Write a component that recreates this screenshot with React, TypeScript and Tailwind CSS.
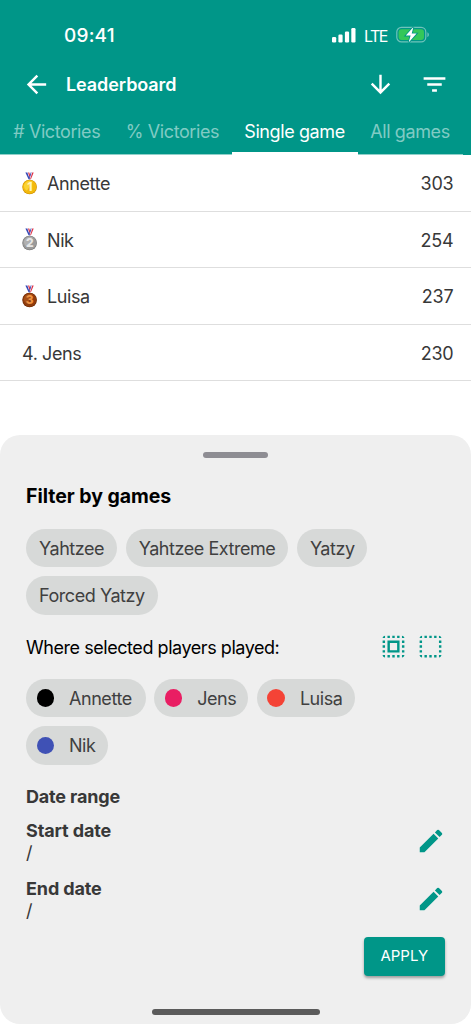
import React from 'react';
import { MdArrowBack, MdArrowDownward, MdEdit, MdFilterList, MdSelectAll } from 'react-icons/md';

interface Player {
  name: string;
  score: number;
}

const players: Player[] = [
  { name: 'Annette', score: 303 },
  { name: 'Nik', score: 254 },
  { name: 'Luisa', score: 237 },
  { name: 'Jens', score: 230 },
];

const tabs = [
  { label: '# Victories', className: 'w-[113.5px]' },
  { label: '% Victories', className: 'w-[118px]' },
  { label: 'Single game', className: 'w-[126px]' },
  { label: 'All games', className: 'w-[105px]' },
];

const games = [
  { label: 'Yahtzee', className: 'w-[91px]' },
  { label: 'Yahtzee Extreme', className: 'w-[162.5px]' },
  { label: 'Yatzy', className: 'w-[70.5px]' },
  { label: 'Forced Yatzy', className: 'w-[132px]' },
];

const playerChips = [
  { label: 'Annette', className: 'w-[119.5px]', dot: 'bg-black' },
  { label: 'Jens', className: 'w-[94px]', dot: 'bg-[#e91e63]' },
  { label: 'Luisa', className: 'w-[98.5px]', dot: 'bg-[#f44336]' },
  { label: 'Nik', className: 'w-[82px]', dot: 'bg-[#3f51b5]' },
];

const medals = [
  { light: '#ffe14a', base: '#f3b90c', dark: '#c98a00', digit: '#fff3b8' },
  { light: '#bdbdbd', base: '#9a9a9a', dark: '#737373', digit: '#e6e6e6' },
  { light: '#b4591d', base: '#8f3c0c', dark: '#682602', digit: '#ee9444' },
];

const Medal: React.FC<{ place: number }> = ({ place }) => {
  const m = medals[place - 1];
  return (
    <svg width="16" height="23" viewBox="0 0 16 23" className="-mt-0.5 shrink-0">
      <path d="M3.4.5h2.2l2.7 6.8H6.6z" fill="#3346b5" />
      <path d="M5.3.5h1.2l1.8 5H7.2z" fill="#f4f4fa" />
      <path d="M6 .5h1.3l1.1 3.4-.6 2z" fill="#df3044" />
      <path d="M8.6.5h1.2l-2 6.8h-.9z" fill="#3346b5" />
      <path d="M9.6.5h.8l-2 6.8h-.8z" fill="#f4f4fa" />
      <path d="M10.2.5h1.5l-2.8 6.8h-.8z" fill="#df3044" />
      <circle cx="7.6" cy="15" r="7.3" fill={m.dark} />
      <circle cx="7.6" cy="14.8" r="6.9" fill={m.base} />
      <path d="M2 13a6 6 0 0 1 8.7-3.4L5 18.8A6 6 0 0 1 2 13z" fill={m.light} opacity=".65" />
      <text x="7.6" y="19" textAnchor="middle" fontSize="12" fontWeight="800" fill={m.digit} fontFamily="Inter, sans-serif">
        {place}
      </text>
    </svg>
  );
};

const DeselectIcon: React.FC = () => (
  <svg width="29" height="29" viewBox="0 0 24 24" fill="currentColor">
    <path d="M3 5h2V3c-1.1 0-2 .9-2 2zm0 8h2v-2H3v2zm4 8h2v-2H7v2zM3 9h2V7H3v2zm10-6h-2v2h2V3zm6 0v2h2c0-1.1-.9-2-2-2zM5 21v-2H3c0 1.1.9 2 2 2zm-2-4h2v-2H3v2zM9 3H7v2h2V3zm2 18h2v-2h-2v2zm8-8h2v-2h-2v2zm0 8c1.1 0 2-.9 2-2h-2v2zm0-12h2V7h-2v2zm0 8h2v-2h-2v2zm-4 4h2v-2h-2v2zm0-16h2V3h-2v2z" />
  </svg>
);

const StatusBar: React.FC = () => (
  <div className="flex h-[70px] items-center pl-16 pr-[41px]">
    <span className="pt-0.5 text-[19px] font-medium tracking-[0.2px]">09:41</span>
    <svg width="24" height="15" viewBox="0 0 24 15" fill="currentColor" className="ml-auto">
      <rect x="0" y="9" width="4.2" height="5.5" rx="1.2" />
      <rect x="6.4" y="6.5" width="4.2" height="8" rx="1.2" />
      <rect x="12.9" y="3.5" width="4.2" height="11" rx="1.2" />
      <rect x="19.3" y="0" width="4.2" height="14.5" rx="1.2" />
    </svg>
    <span className="ml-2 w-6 pt-px text-base tracking-[-1.5px]">LTE</span>
    <svg width="34" height="18" viewBox="0 0 34 18" className="ml-[8px]">
      <rect x=".8" y="1.4" width="29" height="14.4" rx="4.6" fill="none" stroke="#6fc3bb" strokeWidth="1.2" />
      <rect x="2.6" y="3.2" width="25.4" height="10.8" rx="3" fill="#34c759" />
      <path d="M31.4 6.2c2 .8 2 4 0 4.8z" fill="#6fc3bb" />
      <path d="M17.4 1 9.8 9.6h4.8l-2 6.8 8-8.8h-4.9z" fill="white" stroke="#009688" strokeWidth="1.8" paintOrder="stroke" />
    </svg>
  </div>
);

const Header: React.FC = () => (
  <header className="h-[155px] bg-[#009688] text-white">
    <StatusBar />
    <div className="flex h-[29px] items-center pl-[22px] pr-[22px]">
      <MdArrowBack size={29} />
      <h1 className="ml-[15px] text-lg font-semibold tracking-[-0.08px]">Leaderboard</h1>
      <MdArrowDownward size={29} className="ml-auto" />
      <MdFilterList size={29} className="ml-[25.5px]" />
    </div>
    <nav className="flex h-14">
      {tabs.map((tab) => (
        <button
          key={tab.label}
          className={`flex h-14 shrink-0 items-center justify-center whitespace-nowrap pt-[13px] text-lg tracking-[-0.4px] ${tab.className} ${
            tab.label === 'Single game'
              ? 'border-b-[3px] border-white pb-0'
              : 'border-b border-[#8fd0c9] pb-0.5 text-[#80cbc4]'
          }`}
        >
          {tab.label}
        </button>
      ))}
    </nav>
  </header>
);

const Chip: React.FC<{ label: string; className: string; dot?: string }> = ({ label, className, dot }) => (
  <div className={`flex h-[38.5px] items-center whitespace-nowrap rounded-full bg-[#d7d9d8] text-lg tracking-[-0.45px] text-[#404040] ${className} ${dot ? 'pl-[10.5px]' : 'pl-[13px]'}`}>
    {dot && <span className={`mr-[15px] size-[17.5px] shrink-0 rounded-full ${dot}`} />}
    <span className="pt-0.5">{label}</span>
  </div>
);

const DateField: React.FC<{ label: string }> = ({ label }) => (
  <div className="flex h-[58.5px] justify-between">
    <div className="pt-px text-lg leading-[22px]">
      <div className="font-bold tracking-[-0.12px]">{label}</div>
      <div>/</div>
    </div>
    <MdEdit size={30} className="mt-[7px] -mr-px text-[#009688]" />
  </div>
);

const FilterSheet: React.FC = () => (
  <section className="mt-[53.4px] flex h-[589px] flex-col rounded-[20px] bg-[#efefef] pl-[26px] pr-[26px] text-[#383838]">
    <div className="mt-[17px] h-[6.5px] w-[65px] self-center rounded-full bg-[#8e8d93]" />
    <h2 className="mt-[26px] text-[19.5px] leading-6 font-bold tracking-[-0.03px] text-black">Filter by games</h2>
    <div className="mt-[20.5px] flex flex-wrap gap-x-[8.7px] gap-y-[9px]">
      {games.map((game) => (
        <Chip key={game.label} {...game} />
      ))}
    </div>
    <div className="mt-[17.5px] flex h-[29px] items-center justify-between text-black">
      <span className="pt-0.5 text-lg tracking-[-0.45px]">Where selected players played:</span>
      <div className="flex gap-[8.5px] text-[#009688]">
        <MdSelectAll size={29} />
        <DeselectIcon />
      </div>
    </div>
    <div className="mt-[17.5px] flex flex-wrap gap-x-[8.7px] gap-y-[9px]">
      {playerChips.map((chip) => (
        <Chip key={chip.label} {...chip} />
      ))}
    </div>
    <h3 className="mt-[21.5px] mb-[10.5px] text-lg leading-[22px] font-bold tracking-[-0.17px]">Date range</h3>
    <DateField label="Start date" />
    <DateField label="End date" />
    <button className="mt-[1.5px] flex h-[38.5px] w-[81.5px] shrink-0 items-center justify-center self-end rounded-[4px] bg-[#009688] text-[15px] tracking-[0px] text-white shadow-[0_2px_3px_rgba(0,0,0,0.35)]">
      APPLY
    </button>
    <div className="mt-auto mb-[9px] h-[5.5px] w-[168px] shrink-0 self-center rounded-full bg-[#5b5b5b]" />
  </section>
);

const App: React.FC = () => {
  return (
    <div className="h-[1024px] w-[471px] overflow-hidden bg-white font-['Inter',sans-serif]">
      <Header />
      <main className="pt-[0.8px] text-lg text-[#383838]">
        {players.map((player, i) => (
          <div
            key={player.name}
            className="flex h-[56.35px] items-center justify-between border-b border-[#dedede] pt-0.5 pl-[22px] pr-[17.5px]"
          >
            <div className="flex items-center tracking-[-0.4px]">
              {i < 3 ? (
                <>
                  <Medal place={i + 1} />
                  <span className="ml-[9px]">{player.name}</span>
                </>
              ) : (
                <span>{i + 1}. {player.name}</span>
              )}
            </div>
            <span className="tracking-[-0.2px]">{player.score}</span>
          </div>
        ))}
      </main>
      <FilterSheet />
    </div>
  );
};

export default App;
